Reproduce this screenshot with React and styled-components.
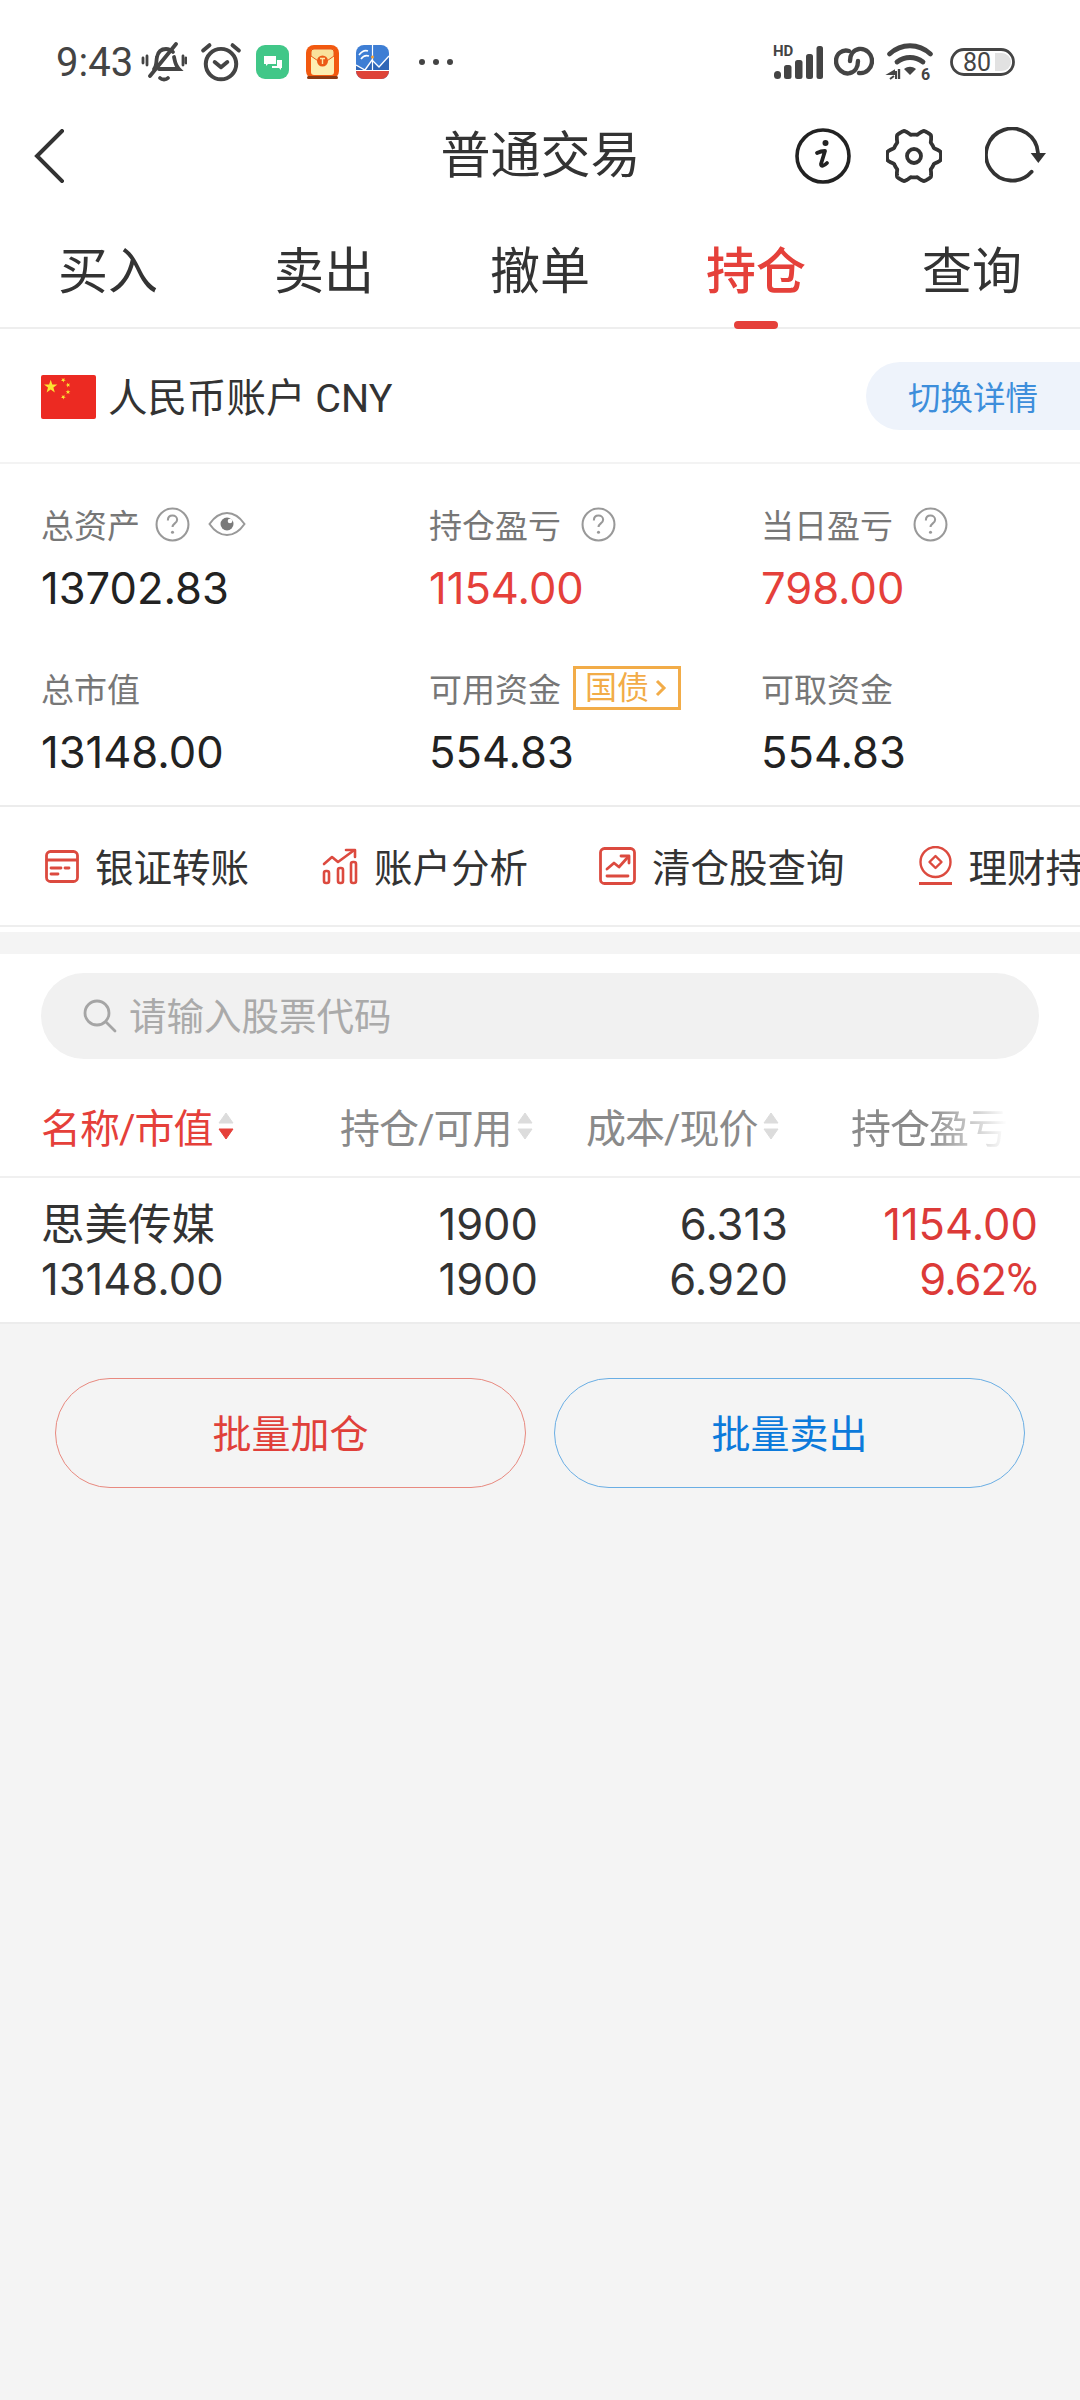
import React from "react";
import styled, { createGlobalStyle } from "styled-components";

const Global = createGlobalStyle`
  html, body { margin: 0; padding: 0; background: #f4f4f4; }
  * { box-sizing: border-box; }
  body { font-family: Roboto, "Noto Sans CJK SC", sans-serif; color: #222; }
`;

const RED = "#e5403a";
const NUM = `Inter, "Noto Sans CJK SC", sans-serif`;
const Page = styled.div`width:1080px;height:2400px;overflow:hidden;background:#f4f4f4;`;
const Top = styled.header`background:#fff;`;
const Status = styled.div`height:124px;display:flex;align-items:center;justify-content:space-between;padding:0 65px 0 56px;color:#444;`;
const StatusGroup = styled.div`display:flex;align-items:center;`;
const Time = styled.span`font-size:40px;font-weight:400;width:85px;`;
const Nav = styled.nav`height:64px;display:grid;grid-template-columns:1fr auto 1fr;align-items:center;padding:0 33px 0 34px;`;
const Title = styled.h1`margin:0;font-size:50px;font-weight:400;line-height:64px;color:#333;`;
const NavIcons = styled.div`display:flex;justify-content:flex-end;align-items:center;`;
const Tabs = styled.div`height:141px;display:grid;grid-template-columns:repeat(5,216px);border-bottom:2px solid #eeeeee;`;
const Tab = styled.div`position:relative;text-align:center;padding-top:53px;font-size:50px;line-height:62px;font-weight:${p=>p.$on?500:400};color:${p=>p.$on?RED:"#333"};`;
const Indicator = styled.i`position:absolute;left:86px;bottom:-2px;width:44px;height:8px;border-radius:4px;background:${RED};`;
const Account = styled.div`height:135px;display:flex;align-items:center;padding-left:41px;gap:12px;border-bottom:2px solid #f3f3f3;background:#fff;`;
const AccountName = styled.span`font-size:39.5px;color:#333;flex:1;margin-bottom:3px;`;
const Switch = styled.div`width:214px;height:68px;border-radius:34px 0 0 34px;background:#eef3fb;color:#3d8edb;font-size:32.5px;display:flex;align-items:center;padding-left:42px;`;
const Stats = styled.section`background:#fff;height:343px;display:grid;grid-template-columns:388px 332px 1fr;grid-auto-rows:164px;padding:30px 0 0 41px;border-bottom:2px solid #ececec;`;
const Stat = styled.div`display:flex;flex-direction:column;`;
const Label = styled.div`height:60px;margin-bottom:2px;display:flex;align-items:center;font-size:33px;color:#777;`;
const Value = styled.div`font-family:${NUM};font-size:43.5px;line-height:64px;color:${p=>p.$red?RED:"#222"};`;
const Help = styled.svg`width:35px;height:35px;margin-left:${p=>p.$ml||15}px;flex:none;`;
const Eye = styled.svg`width:38px;height:28px;margin-left:18px;`;
const Badge = styled.span`display:inline-flex;align-items:center;width:108px;height:44px;margin-left:12px;border:3px solid #f2ac48;color:#f2ac48;font-size:32px;padding-left:9px;line-height:1;`;
const Shortcuts = styled.div`background:#fff;height:120px;display:flex;align-items:center;padding-left:45px;white-space:nowrap;overflow:hidden;border-bottom:2px solid #eeeeee;`;
const Shortcut = styled.div`display:flex;align-items:center;gap:16px;margin-right:${p=>p.$mr}px;font-size:38.5px;color:#333;flex:none;`;
const ShortcutText = styled.span`margin-bottom:3px;`;
const Band = styled.div`height:27px;background:#f4f4f4;border-top:5px solid #fff;`;
const Holdings = styled.section`background:#fff;`;
const SearchWrap = styled.div`padding:19px 41px 0;`;
const Search = styled.div`height:86px;border-radius:43px;background:#f1f1f1;display:flex;align-items:center;gap:12px;padding-left:42px;color:#aaa;font-size:37.5px;`;
const Placeholder = styled.span`margin-bottom:6px;`;
const Head = styled.div`height:119px;display:grid;grid-template-columns:299px 246px 265px 1fr;padding-left:41px;align-items:center;border-bottom:2px solid #f0f0f0;padding-top:17px;`;
const HeadCell = styled.div`display:flex;align-items:center;gap:3px;font-size:40px;letter-spacing:-1px;color:${p=>p.$on?RED:"#8a8a8a"};white-space:nowrap;${p=>p.$fade?"width:156px;overflow:hidden;-webkit-mask-image:linear-gradient(90deg,#000 50%,transparent 100%);mask-image:linear-gradient(90deg,#000 50%,transparent 100%);":""}`;
const Row = styled.div`height:146px;display:grid;grid-template-columns:250px 247px 250px 250px;grid-template-rows:55px 55px;align-content:center;padding:3px 0 0 41px;border-bottom:2px solid #ececec;font-family:${NUM};font-size:43.5px;line-height:55px;color:#333;`;
const Cell = styled.div`text-align:${p=>p.$left?"left":"right"};color:${p=>p.$red?"#dc3a38":"#333"};`;
const Pct = styled.span`font-family:Roboto,sans-serif;`;
const Tight = styled.span`letter-spacing:-1px;`;
const Actions = styled.div`display:flex;gap:28px;padding:54px 0 0 55px;`;
const Btn = styled.div`width:471px;height:110px;border-radius:55px;border:1.5px solid ${p=>p.$c};display:flex;align-items:center;justify-content:center;padding-bottom:4px;font-size:39px;color:${p=>p.$t};`;
const Vis = { overflow: "visible" };

function Bell(){return <svg width="46" height="40" viewBox="0 0 46 40" fill="none" stroke="#444" strokeWidth="3.8" strokeLinecap="round" style={{marginRight:13}}>
  <path d="M13 27c3-3 2-8 3-12 1-5 4-8 9-8 3 0 5 1 7 3M33 15c1 4 1 8 5 12H18"/><path d="M9 34 35 2"/><path d="M19 36c2 2 6 2 8 0"/><path d="M6 14v9M2 16v5M42 14v9M45 16v5" strokeWidth="2.8"/></svg>}
function Alarm(){return <svg width="42" height="40" viewBox="0 0 40 38" fill="none" stroke="#444" strokeWidth="3.8" strokeLinecap="round" strokeLinejoin="round" style={{marginRight:14}}>
  <circle cx="20" cy="21" r="14.5"/><path d="M14 19l6 5 6-5"/><path d="M3 8l6-5M37 8l-6-5"/></svg>}
function Green(){return <svg width="33" height="34" viewBox="0 0 33 34" style={{marginRight:17}}><rect width="33" height="34" rx="9" fill="#41c788"/>
  <path d="M8 11h12v8h-8l-2 2v-2H8z" fill="#fff"/><path d="M21 15h5v8h-1v2l-2-2h-7v-2h5z" fill="#fff"/></svg>}
function Packet(){return <svg width="33" height="34" viewBox="0 0 33 34" style={{marginRight:17}}><rect width="33" height="34" rx="8" fill="#f2590f"/><rect x="1" y="31" width="31" height="3" rx="1.5" fill="#8a3a14"/>
  <rect x="5" y="4" width="23" height="26" rx="3" fill="#fdeeb2"/><path d="M5 11l11.5 8L28 11V7a3 3 0 0 0-3-3H8a3 3 0 0 0-3 3z" fill="#f9e19c" stroke="#e8591a" strokeWidth="1"/><circle cx="16.5" cy="16" r="5.5" fill="#ec5a16"/><path d="M14 13.5h5M16.5 13.5v5.500" stroke="#fde6a7" strokeWidth="1.4"/></svg>}
function Sina(){return <svg width="33" height="34" viewBox="0 0 33 34" style={{marginRight:29}}><rect width="33" height="34" rx="8" fill="#3e7ed4"/><path d="M0 20l9 5 7-10 7 7 10-11v14H0z" fill="#2f66b6"/><path d="M0 20l9 5 7-10 7 7 10-11" fill="none" stroke="#fff" strokeWidth="1.4"/><path d="M16.5 0v25" stroke="#fff" strokeWidth="1.2"/><circle cx="16.5" cy="12" r="1.6" fill="#f0a03a"/>
  <path d="M0 25h33v1H0z" fill="#fff"/><path d="M0 26h33v0a8 8 0 0 1-8 8H8a8 8 0 0 1-8-8z" fill="#de4338"/><path d="M3 10c3-4 6-5 9-4M5 14c2-3 5-4 8-3" stroke="#fff" strokeWidth="1.6" fill="none"/></svg>}
function Dots(){return <svg width="36" height="8" viewBox="0 0 36 8" fill="#444"><circle cx="4" cy="4" r="3"/><circle cx="18" cy="4" r="3"/><circle cx="32" cy="4" r="3"/></svg>}
function Signal(){return <svg width="50" height="36" viewBox="0 0 50 36" fill="#444" style={{marginRight:11,...Vis}}><text x="0" y="12" fontFamily="Roboto" fontWeight="700" fontSize="15" fill="#444">HD</text>
  <rect x="1" y="27" width="7" height="8" rx="3.5"/><rect x="11" y="21" width="7.5" height="14" rx="2.5"/><rect x="22" y="16" width="7.5" height="19" rx="2.5"/><rect x="33" y="10" width="7" height="25" rx="2.5"/><rect x="43.5" y="2" width="6.5" height="33" rx="2.5"/></svg>}
function Link(){return <svg width="40" height="32" viewBox="0 0 40 32" fill="none" stroke="#444" strokeWidth="4.4" strokeLinecap="round" style={{marginRight:13}}>
  <path d="M15 5C8 3 2 8 2 15c0 8 8 14 14 12 5-1 8-6 8-12"/><path d="M16 15c0-6 3-11 9-12 7-1 13 5 13 12 0 7-6 13-13 12"/></svg>}
function Wifi(){return <svg width="46" height="38" viewBox="0 0 46 38" style={{marginRight:17,...Vis}}><g fill="none" stroke="#444" strokeWidth="4.8" strokeLinecap="round"><path d="M2.5 11c12-11 29-11 41 0"/><path d="M10 19c8-6 18-6 26 0"/></g><path d="M17 26c4-3 8-3 12 0l-6 6z" fill="#444"/>
  <path d="M2 31h5v-3zM9 28v8M7 33l-4 3" stroke="#444" strokeWidth="2" fill="none"/><path d="M12 26v10" stroke="#444" strokeWidth="2.4"/><text x="34" y="37" fontFamily="Roboto" fontWeight="700" fontSize="16" fill="#444">6</text></svg>}
function Battery(){return <svg width="65" height="28" viewBox="0 0 65 28" style={Vis}><rect x="1.5" y="1.5" width="62" height="25" rx="12.5" fill="none" stroke="#444" strokeWidth="2.8"/><path d="M45 5h7a9 9 0 0 1 0 18h-7z" fill="#e2e2e2"/><text x="27" y="22.5" textAnchor="middle" fontFamily="Roboto" fontSize="25" fill="#444">80</text></svg>}

function Back(){return <svg width="30" height="54" viewBox="0 0 30 54" fill="none" stroke="#333" strokeWidth="4" strokeLinecap="square" style={{display:"block"}}><path d="M28 2 3 27l25 25"/></svg>}
function Info(){return <svg width="56" height="56" viewBox="0 0 56 56" fill="none" style={{marginRight:35}}><circle cx="28" cy="28" r="26" stroke="#222" strokeWidth="3.6"/>
  <path d="M22 25c2-1 4-2 8-2l-4 13c0 3 3 2 6-1" stroke="#222" strokeWidth="3.8" strokeLinejoin="round" strokeLinecap="round"/><circle cx="30.5" cy="15" r="3" fill="#222"/></svg>}
function gearPath(){const pts=[];for(let i=0;i<=360;i++){const t=i/360*Math.PI*2;const w=Math.cos(6*t+Math.PI);const s=Math.max(-1,Math.min(1,w*1.6));const r=24.2+2.8*s;pts.push(`${(28+r*Math.sin(t)).toFixed(2)} ${(28-r*Math.cos(t)).toFixed(2)}`);}return "M"+pts.join("L")+"Z";}
function Gear(){return <svg width="56" height="56" viewBox="0 0 56 56" fill="none" stroke="#333" strokeWidth="3.8" strokeLinejoin="round" style={{marginRight:43}}><path d={gearPath()}/><circle cx="28" cy="28" r="7"/></svg>}
function Refresh(){return <svg width="62" height="58" viewBox="0 0 62 58" fill="none"><path d="M46.6 44.7A26 26 0 1 1 53 26" stroke="#333" strokeWidth="3.8" strokeLinecap="round"/><path d="M45.700 26H61L53.300 36z" fill="#333"/></svg>}

function Flag(){const star=(x,y,r,rot=0)=>{const p=[];for(let i=0;i<10;i++){const a=i*Math.PI/5-Math.PI/2+rot;const R=i%2?r*0.4:r;p.push(`${(x+R*Math.cos(a)).toFixed(1)},${(y+R*Math.sin(a)).toFixed(1)}`);}return <polygon points={p.join(" ")} fill="#fbe432"/>;};
  return <svg width="55" height="44" viewBox="0 0 55 44" style={{flex:"none",marginTop:2}}><rect width="55" height="44" rx="2" fill="#ec2a22"/>{star(9.7,11.7,7)}{star(22.3,5,2.5,.5)}{star(27,10,2.5,.9)}{star(27,17,2.5,0)}{star(22.3,22,2.5,.5)}</svg>}

function Q(p){return <Help viewBox="0 0 34 34" fill="none" {...p}><circle cx="17" cy="17" r="15.5" stroke="#999" strokeWidth="2"/><path d="M12.5 13c0-3 2-4.7 4.500-4.700s4.500 1.700 4.500 4c0 3.500-4.500 3.700-4.500 7.200" stroke="#999" strokeWidth="2"/><circle cx="17" cy="24.5" r="1.500" fill="#999"/></Help>}
function EyeIcon(){return <Eye viewBox="0 0 38 28" fill="none"><path d="M1.5 14C7 6 12 3 19 3s12 3 17.5 11C31 22 26 25 19 25S7 22 1.5 14z" stroke="#999" strokeWidth="2"/><circle cx="19" cy="14" r="6.5" fill="#7a7a7a"/><circle cx="22" cy="11" r="2.3" fill="#fff"/></Eye>}
function Chev(){return <svg width="12" height="20" viewBox="0 0 12 20" fill="none" stroke="#f2ac48" strokeWidth="3" style={{marginLeft:6}}><path d="M2 3l7 7-7 7"/></svg>}

function Card(){return <svg width="34" height="33" viewBox="0 0 34 33" fill="none" stroke="#dc4a3f" strokeWidth="2.8" strokeLinecap="round"><rect x="1.5" y="1.5" width="31" height="30" rx="4"/><path d="M2 10h30M6 18h10M20 18h4M6 24h7"/></svg>}
function Chart(){return <svg width="36" height="38" viewBox="0 0 36 38" fill="none" stroke="#dc4a3f" strokeWidth="2.6" strokeLinecap="round" strokeLinejoin="round"><rect x="2" y="24" width="5" height="12" rx="2"/><rect x="16" y="21" width="5" height="15" rx="2"/><rect x="29" y="15" width="5" height="21" rx="2"/><path d="M2 17l8-7 6 5L31 4"/><path d="M24 3h9v7"/></svg>}
function Clear(){return <svg width="37" height="38" viewBox="0 0 37 38" fill="none" stroke="#dc4a3f" strokeWidth="2.8" strokeLinecap="round" strokeLinejoin="round"><rect x="1.5" y="1.5" width="34" height="35" rx="4"/><path d="M8 22l7-6 5 4 9-10"/><path d="M22 9h8v7"/><path d="M8 29h21"/></svg>}
function Coin(){return <svg width="35" height="40" viewBox="0 0 35 40" fill="none" stroke="#dc4a3f" strokeWidth="2.4" strokeLinejoin="round"><circle cx="17.5" cy="16" r="15"/><path d="M17.5 10l6 6-6 6-6-6z"/><path d="M1 37.500h33" strokeWidth="3"/></svg>}
function SearchIcon(){return <svg width="34" height="34" viewBox="0 0 34 34" fill="none" stroke="#a5a5a5" strokeWidth="2.8" strokeLinecap="round"><circle cx="14" cy="14" r="12"/><path d="M23 23l9 9"/></svg>}
function Sort({on}){return <svg width="20" height="30" viewBox="0 0 20 30" style={{flex:"none"}}><path d="M10 2l7 10H3z" fill="#dcdcdc" stroke="#dcdcdc" strokeLinejoin="round"/><path d="M10 28l7-10H3z" fill={on?RED:"#dcdcdc"} stroke={on?RED:"#dcdcdc"} strokeLinejoin="round"/></svg>}

export default function App(){
  const tabs=["买入","卖出","撤单","持仓","查询"];
  return <Page><Global/>
    <Top>
      <Status>
        <StatusGroup><Time>9:43</Time><Bell/><Alarm/><Green/><Packet/><Sina/><Dots/></StatusGroup>
        <StatusGroup><Signal/><Link/><Wifi/><Battery/></StatusGroup>
      </Status>
      <Nav><Back/><Title>普通交易</Title><NavIcons><Info/><Gear/><Refresh/></NavIcons></Nav>
      <Tabs>{tabs.map((t,i)=><Tab key={t} $on={i===3}>{t}{i===3&&<Indicator/>}</Tab>)}</Tabs>
    </Top>
    <Account><Flag/><AccountName>人民币账户 CNY</AccountName><Switch>切换详情</Switch></Account>
    <Stats>
      <Stat><Label>总资产<Q/><EyeIcon/></Label><Value>13702.83</Value></Stat>
      <Stat><Label>持仓盈亏<Q $ml={20}/></Label><Value $red>1154.00</Value></Stat>
      <Stat><Label>当日盈亏<Q $ml={20}/></Label><Value $red>798.00</Value></Stat>
      <Stat><Label>总市值</Label><Value>13148.00</Value></Stat>
      <Stat><Label>可用资金<Badge>国债<Chev/></Badge></Label><Value>554.83</Value></Stat>
      <Stat><Label>可取资金</Label><Value>554.83</Value></Stat>
    </Stats>
    <Shortcuts>
      <Shortcut $mr={73}><Card/><ShortcutText>银证转账</ShortcutText></Shortcut>
      <Shortcut $mr={71}><Chart/><ShortcutText>账户分析</ShortcutText></Shortcut>
      <Shortcut $mr={73}><Clear/><ShortcutText>清仓股查询</ShortcutText></Shortcut>
      <Shortcut $mr={0}><Coin/><ShortcutText>理财持仓</ShortcutText></Shortcut>
    </Shortcuts>
    <Band/>
    <Holdings>
      <SearchWrap><Search><SearchIcon/><Placeholder>请输入股票代码</Placeholder></Search></SearchWrap>
      <Head>
        <HeadCell $on>名称/市值<Sort on/></HeadCell>
        <HeadCell>持仓/可用<Sort/></HeadCell>
        <HeadCell>成本/现价<Sort/></HeadCell>
        <HeadCell $fade>持仓盈亏</HeadCell>
      </Head>
      <Row>
        <Cell $left>思美传媒</Cell><Cell>1900</Cell><Cell>6.313</Cell><Cell $red>1154.00</Cell>
        <Cell $left>13148.00</Cell><Cell>1900</Cell><Cell>6.920</Cell><Cell $red><Tight>9.62</Tight><Pct>%</Pct></Cell>
      </Row>
    </Holdings>
    <Actions>
      <Btn $c="#e8897f" $t="#e0403a">批量加仓</Btn>
      <Btn $c="#6aaee4" $t="#0c7adb">批量卖出</Btn>
    </Actions>
  </Page>;
}
